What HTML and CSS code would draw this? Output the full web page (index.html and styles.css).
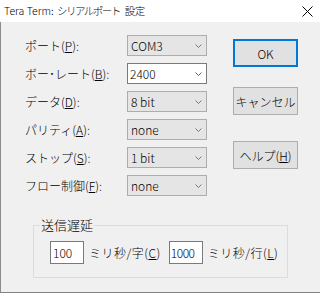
FILE: index.html
```html
<!DOCTYPE html>
<html>
<head>
  <title>Tera Term: シリアルポート 設定</title>
  <link rel="stylesheet" href="styles.css">
</head>
<body>
  <div class="window">
    <div class="titlebar">
      <span class="title">Tera Term: <span class="kana">シリアルポート</span><span class="kanji">設定</span></span>
      <svg class="close" width="11" height="11" viewBox="0 0 11 11">
        <path d="M0.5 0.5 L10.5 10.5 M10.5 0.5 L0.5 10.5" stroke="#000" stroke-width="1" fill="none"/>
      </svg>
    </div>

    <div class="client">
      <div class="top">
        <div class="fields">
          <div class="row">
            <label>ポート(<u>P</u>):</label>
            <div class="combo">COM3<svg class="arrow" width="7" height="4" viewBox="0 0 7 4"><path d="M0.5 0.5 L3.5 3.5 L6.5 0.5" stroke="#7a7a7a" fill="none"/></svg></div>
          </div>
          <div class="row">
            <label>ボー･レート(<u>B</u>):</label>
            <div class="combo edit">2400<svg class="arrow" width="7" height="4" viewBox="0 0 7 4"><path d="M0.5 0.5 L3.5 3.5 L6.5 0.5" stroke="#606060" fill="none"/></svg></div>
          </div>
          <div class="row">
            <label>データ(<u>D</u>):</label>
            <div class="combo">8 bit<svg class="arrow" width="7" height="4" viewBox="0 0 7 4"><path d="M0.5 0.5 L3.5 3.5 L6.5 0.5" stroke="#7a7a7a" fill="none"/></svg></div>
          </div>
          <div class="row">
            <label>パリティ(<u>A</u>):</label>
            <div class="combo">none<svg class="arrow" width="7" height="4" viewBox="0 0 7 4"><path d="M0.5 0.5 L3.5 3.5 L6.5 0.5" stroke="#7a7a7a" fill="none"/></svg></div>
          </div>
          <div class="row">
            <label>ストップ(<u>S</u>):</label>
            <div class="combo">1 bit<svg class="arrow" width="7" height="4" viewBox="0 0 7 4"><path d="M0.5 0.5 L3.5 3.5 L6.5 0.5" stroke="#7a7a7a" fill="none"/></svg></div>
          </div>
          <div class="row">
            <label>フロー制御(<u>F</u>):</label>
            <div class="combo">none<svg class="arrow" width="7" height="4" viewBox="0 0 7 4"><path d="M0.5 0.5 L3.5 3.5 L6.5 0.5" stroke="#7a7a7a" fill="none"/></svg></div>
          </div>
        </div>

        <div class="buttons">
          <div class="btn default">OK</div>
          <div class="btn cancel">キャンセル</div>
          <div class="btn help">ヘルプ(<u>H</u>)</div>
        </div>
      </div>

      <div class="group">
        <div class="group-title"><span>送信遅延</span></div>
        <div class="delay-row">
          <div class="num">100</div>
          <span class="unit">ミリ秒/字(<u>C</u>)</span>
          <div class="num wide">1000</div>
          <span class="unit">ミリ秒/行(<u>L</u>)</span>
        </div>
      </div>
    </div>
  </div>
</body>
</html>
```

FILE: styles.css
```css
body {
  margin: 0;
  font-family: "Noto Sans CJK JP", "Noto Sans", sans-serif;
  font-size: 12px;
  font-weight: 300;
  color: #000000;
}

.window {
  width: 320px;
  height: 293px;
  box-sizing: border-box;
  background-color: #f0f0f0;
  border-bottom: 1px solid #838383;
}

.titlebar {
  height: 22px;
  background-color: #ffffff;
  display: flex;
  align-items: center;
  justify-content: space-between;
  padding: 0 7px 0 4px;
}

.title {
  font-size: 10.5px;
  line-height: 22px;
  white-space: nowrap;
}

.title .kana {
  margin-left: 1px;
  letter-spacing: -1.5px;
}

.title .kanji {
  margin-left: 5px;
  letter-spacing: -0.5px;
}

.client {
  height: 270px;
  box-sizing: border-box;
  border-left: 1px solid #8c8c8c;
  padding: 13px 0 0 24px;
}

.top {
  display: flex;
  height: 161px;
}

.fields {
  display: flex;
  flex-direction: column;
  gap: 7px;
}

.row {
  display: flex;
  align-items: center;
  height: 21px;
}

label {
  width: 102px;
  line-height: 16px;
  white-space: nowrap;
}

.combo {
  width: 80px;
  height: 21px;
  box-sizing: border-box;
  border: 1px solid #adadad;
  background-color: #e5e5e5;
  display: flex;
  align-items: center;
  justify-content: space-between;
  padding: 0 4px 0 3px;
  line-height: 19px;
}

.combo.edit {
  background-color: #ffffff;
  border-color: #7a7a7a;
  padding-left: 2px;
}

.buttons {
  display: flex;
  flex-direction: column;
  margin-left: 26px;
  padding-top: 4px;
}

.btn {
  width: 65px;
  height: 28px;
  box-sizing: border-box;
  border: 1px solid #adadad;
  background-color: #e1e1e1;
  display: flex;
  align-items: center;
  justify-content: center;
  white-space: nowrap;
}

.btn.default {
  border: 2px solid #0078d7;
}

.btn.cancel {
  margin-top: 20px;
}

.btn.help {
  margin-top: 26px;
}

.group {
  margin: 29px 0 0 8px;
  width: 255px;
  height: 53px;
  box-sizing: border-box;
  border: 1px solid #dcdcdc;
  padding: 0 0 0 16px;
}

.group-title {
  height: 15px;
  margin: -9px 0 0 -10px;
  line-height: 16px;
  font-size: 13px;
}

.group-title span {
  background-color: #f0f0f0;
  padding: 0 1px;
}

.delay-row {
  display: flex;
  align-items: center;
  margin-top: 9px;
}

.num {
  width: 34px;
  height: 23px;
  box-sizing: border-box;
  border: 1px solid #7a7a7a;
  background-color: #ffffff;
  padding-left: 2px;
  line-height: 21px;
}

.num.wide {
  padding-left: 1px;
  letter-spacing: -0.5px;
}

.unit {
  margin: 0 8px 0 5px;
  letter-spacing: 0.5px;
}
```
